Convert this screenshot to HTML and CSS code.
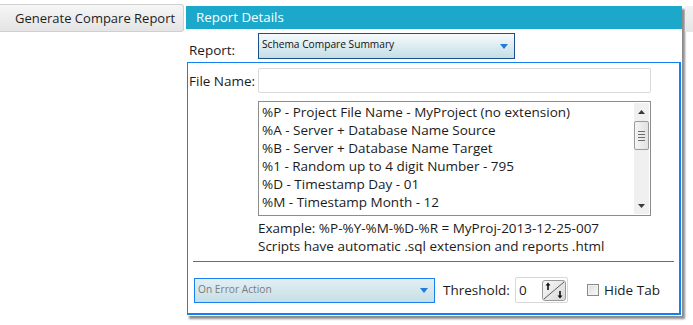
FILE: index.html
```html
<!DOCTYPE html>
<html>
<head>
<meta charset="utf-8">
<link rel="stylesheet" href="styles.css">
</head>
<body>
<div class="app">
  <button class="gen-btn">Generate Compare Report</button>
  <div class="panel">
    <div class="panel-head">Report Details</div>
    <div class="report-row">
      <span class="lbl report-lbl">Report:</span>
      <div class="combo">
        <span class="combo-text">Schema Compare Summary</span>
        <svg class="arrow" width="8" height="5" viewBox="0 0 8 5"><path d="M0 0H8L4 5Z" fill="#1f7bd8"/></svg>
      </div>
    </div>
    <div class="box">
      <div class="file-row">
        <span class="lbl file-lbl">File Name:</span>
        <div class="input"></div>
      </div>
      <div class="list">
        <div class="list-items">
          <div>%P - Project File Name - MyProject (no extension)</div>
          <div>%A - Server + Database Name Source</div>
          <div>%B - Server + Database Name Target</div>
          <div>%1 - Random up to 4 digit Number - 795</div>
          <div>%D - Timestamp Day - 01</div>
          <div>%M - Timestamp Month - 12</div>
        </div>
        <div class="scroll">
          <svg class="sc-up" width="7" height="4" viewBox="0 0 7 4"><path d="M0 4H7L3.5 0Z" fill="#3a3a3a"/></svg>
          <div class="thumb">
            <span></span><span></span><span></span><span></span>
          </div>
          <svg class="sc-down" width="7" height="4" viewBox="0 0 7 4"><path d="M0 0H7L3.5 4Z" fill="#3a3a3a"/></svg>
        </div>
      </div>
      <div class="notes">
        <div>Example: %P-%Y-%M-%D-%R = MyProj-2013-12-25-007</div>
        <div>Scripts have automatic .sql extension and reports .html</div>
      </div>
      <div class="sep"></div>
      <div class="bottom-row">
        <div class="combo err-combo">
          <span class="combo-text err-text">On Error Action</span>
          <svg class="arrow" width="8" height="5" viewBox="0 0 8 5"><path d="M0 0H8L4 5Z" fill="#1f7bd8"/></svg>
        </div>
        <span class="lbl thr-lbl">Threshold:</span>
        <div class="spin">
          <span class="spin-val">0</span>
          <div class="spin-btn">
            <svg width="22" height="19" viewBox="0 0 22 19">
              <path d="M1 18L21 1" stroke="#5a5a5a" stroke-width="1"/>
              <path d="M5 9V3" stroke="#111" stroke-width="1.6"/>
              <path d="M2.5 4.5L5 1.5L7.5 4.5Z" fill="#111"/>
              <path d="M17 10V16" stroke="#111" stroke-width="1.6"/>
              <path d="M14.5 14.5L17 17.5L19.5 14.5Z" fill="#111"/>
            </svg>
          </div>
        </div>
        <span class="check"></span>
        <span class="lbl hide-lbl">Hide Tab</span>
      </div>
    </div>
  </div>
  <div class="ghost"></div>
</div>
</body>
</html>
```
FILE: styles.css
```css
html, body {
  margin: 0;
  padding: 0;
  background: #fff;
}
body {
  width: 693px;
  height: 325px;
  overflow: hidden;
  font-family: "Open Sans", "Noto Sans", sans-serif;
  font-size: 13.5px;
  color: #1b1b1b;
}
.app {
  display: flex;
  align-items: flex-start;
  padding-top: 4px;
}
.gen-btn {
  width: 184px;
  height: 28px;
  margin: 0;
  padding: 0 0 0 15px;
  text-align: left;
  white-space: nowrap;
  overflow: hidden;
  border: 1px solid #d0d0d0;
  border-left: none;
  border-radius: 0 3px 3px 0;
  background: linear-gradient(#f6f6f6, #e4e4e4);
  font-family: inherit;
  font-size: 13px;
  color: #1e1e1e;
  flex: none;
}
.panel {
  flex: none;
  margin-left: 2px;
  margin-top: 2px;
  width: 496px;
  height: 310px;
  background: #fff;
  box-shadow: 3px 3px 2px rgba(0, 0, 0, 0.45);
  display: flex;
  flex-direction: column;
}
.panel-head {
  height: 23px;
  line-height: 23px;
  background: #1ba8cb;
  color: #fff;
  font-size: 13.3px;
  padding-left: 10px;
}
.lbl {
  white-space: nowrap;
}
.report-row {
  display: flex;
  align-items: flex-start;
  margin-top: 4px;
  height: 26px;
}
.report-lbl {
  width: 69px;
  padding-left: 3px;
  margin-top: 8px;
}
.combo {
  box-sizing: border-box;
  width: 257px;
  height: 26px;
  border: 1px solid #1d4f8a;
  background: linear-gradient(#f6fafc, #c4dee6);
  display: flex;
  align-items: center;
  justify-content: space-between;
  padding: 0 6px 0 3px;
}
.combo-text {
  font-size: 10.2px;
  color: #111;
  margin-top: -4px;
}
.arrow {
  display: block;
}
.box {
  box-sizing: border-box;
  margin-top: 3px;
  margin-left: 1px;
  width: 494px;
  height: 253px;
  border: solid #1580f2;
  border-width: 1px 2px 2px 1px;
  padding-left: 1px;
}
.file-row {
  display: flex;
  align-items: center;
  margin-top: 5px;
}
.file-lbl {
  width: 69px;
}
.input {
  box-sizing: border-box;
  width: 393px;
  height: 25px;
  border: 1px solid #dadada;
  border-radius: 2px;
  background: #fff;
}
.list {
  position: relative;
  box-sizing: border-box;
  margin-left: 69px;
  margin-top: 8px;
  width: 393px;
  height: 115px;
  border: 1px solid #8c8c8c;
  padding: 1px 0 0 3px;
  line-height: 18px;
  overflow: hidden;
}
.list-items div {
  white-space: nowrap;
}
.scroll {
  position: absolute;
  top: 1px;
  right: 1px;
  bottom: 1px;
  width: 15px;
  background: #f0f0f0;
}
.sc-up {
  position: absolute;
  top: 7px;
  left: 4px;
}
.sc-down {
  position: absolute;
  bottom: 6px;
  left: 4px;
}
.thumb {
  position: absolute;
  top: 18px;
  left: 0;
  width: 13px;
  height: 27px;
  border: 1px solid #9a9a9a;
  border-radius: 2px;
  background: linear-gradient(90deg, #f4f4f4, #e2e2e2);
  display: flex;
  flex-direction: column;
  align-items: center;
  justify-content: center;
  gap: 2px;
}
.thumb span {
  display: block;
  width: 7px;
  height: 1px;
  background: #6c6c6c;
}
.notes {
  margin-left: 69px;
  margin-top: 3px;
  line-height: 18px;
  white-space: nowrap;
}
.sep {
  margin: 6px 0 0 4px;
  width: 481px;
  height: 1px;
  background: #1580f2;
}
.bottom-row {
  display: flex;
  align-items: center;
  margin-top: 15px;
}
.err-combo {
  margin-left: 5px;
  width: 241px;
  height: 25px;
  border-color: #1a7ff0;
  background: linear-gradient(#e3eff4, #c6dfe6);
}
.err-text {
  color: #7c7c7c;
  margin-top: -2px;
}
.thr-lbl {
  margin-left: 8px;
  width: 72px;
}
.spin {
  position: relative;
  box-sizing: border-box;
  width: 53px;
  height: 26px;
  border: 1px solid #d8d8d8;
  border-radius: 2px;
  background: #fff;
}
.spin-val {
  position: absolute;
  left: 3px;
  top: 3px;
}
.spin-btn {
  position: absolute;
  right: 1px;
  top: 2px;
  box-sizing: border-box;
  width: 24px;
  height: 21px;
  border: 1px solid #9a9a9a;
  border-radius: 3px;
  background: linear-gradient(135deg, #f8f8f8, #d8d8d8);
  overflow: hidden;
}
.spin-btn svg {
  display: block;
}
.check {
  box-sizing: border-box;
  margin-left: 19px;
  width: 12px;
  height: 12px;
  border: 1px solid #8a8a8a;
  background: linear-gradient(135deg, #dcdcdc, #fafafa);
  box-shadow: inset 0 0 0 1px #f2f2f2;
}
.hide-lbl {
  margin-left: 5px;
}
.ghost {
  flex: none;
  margin-left: 3px;
  margin-top: 2px;
  width: 10px;
  height: 26px;
  background: linear-gradient(#f2f2f2, #e6e6e6);
}
```
